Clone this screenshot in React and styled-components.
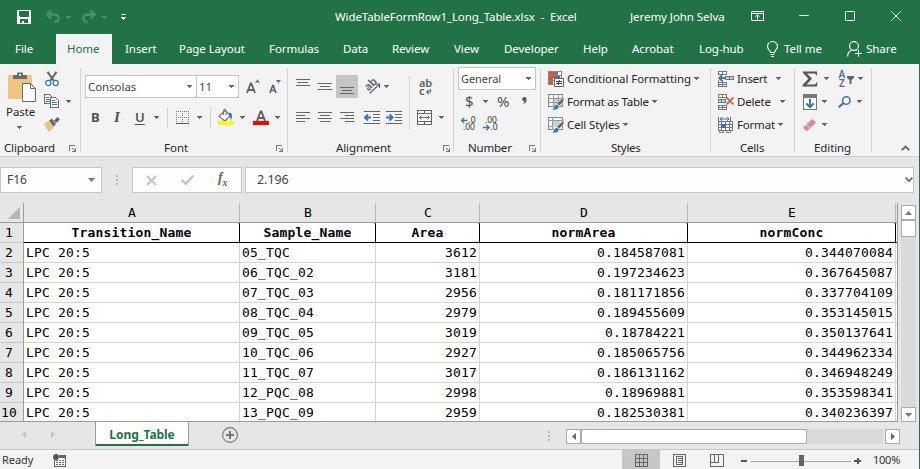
import React from "react";
import styled, { createGlobalStyle, css } from "styled-components";

const C = {
  green: "#217346",
  ribbon: "#f3f3f3",
  chrome: "#e6e6e6",
  line: "#d4d4d4",
  box: "#c6c6c6",
  ink: "#262626",
  icon: "#6a6a6a",
  blue: "#3a76b4",
};

const Global = createGlobalStyle`
  *, *::before, *::after { box-sizing: border-box; }
  body { margin: 0; background: ${C.chrome}; overflow: hidden; }
`;

const ui = `"Noto Sans", "Open Sans", sans-serif`;
const mono = `"DejaVu Sans Mono", "Liberation Mono", monospace`;

const Window = styled.div`
  width: 920px;
  height: 469px;
  display: flex;
  flex-direction: column;
  border-right: 1px solid ${C.green};
  background: ${C.chrome};
  font: 11.5px/16px ${ui};
  letter-spacing: -0.06px;
  color: ${C.ink};
  overflow: hidden;
`;

const Icon = styled.svg`
  display: block;
  flex: none;
  margin-left: ${(p) => p.$ml || 0}px;
  margin-top: ${(p) => p.$mt || 0}px;
  overflow: visible;
`;

const IconSlot = styled.div`
  flex: none;
  margin-left: ${(p) => p.$ml || 0}px;
  margin-top: ${(p) => p.$mt || 0}px;
`;

const Text = styled.span`
  flex: none;
  white-space: pre;
  margin-left: ${(p) => p.$ml || 0}px;
  margin-top: ${(p) => p.$mt || 0}px;
  width: ${(p) => (p.$w ? p.$w + "px" : "auto")};
  letter-spacing: ${(p) => p.$ls ?? -0.06}px;
  font-size: ${(p) => p.$size || 11.5}px;
`;

/* ---------- title bar and tabs ---------- */

const TitleBar = styled.header`
  height: 34px;
  flex: none;
  display: flex;
  align-items: center;
  background: ${C.green};
  color: #fff;
`;

const TabStrip = styled.nav`
  height: 30px;
  flex: none;
  padding-left: 15px;
  display: flex;
  align-items: center;
  background: ${C.green};
  color: #fff;
`;

const Tab = styled.div`
  flex: none;
  width: ${(p) => p.$w}px;
  height: 30px;
  padding-left: ${(p) => p.$pl || 0}px;
  display: flex;
  align-items: center;
  white-space: nowrap;
  ${(p) =>
    p.$active &&
    css`
      background: ${C.ribbon};
      color: ${C.green};
    `}
`;

/* ---------- ribbon ---------- */

const Ribbon = styled.section`
  height: 93px;
  flex: none;
  display: flex;
  background: ${C.ribbon};
  border-bottom: 1px solid #cfcfcf;
`;

const Group = styled.div`
  flex: none;
  width: ${(p) => p.$w}px;
  height: 92px;
  display: flex;
  flex-direction: column;
`;

const GroupBody = styled.div`
  height: 76px;
  flex: none;
  display: flex;
  flex-direction: ${(p) => (p.$row ? "row" : "column")};
  padding-top: ${(p) => p.$pt || 0}px;
`;

const Line = styled.div`
  flex: none;
  height: ${(p) => p.$h || 23}px;
  display: flex;
  align-items: center;
`;

const GroupFoot = styled.div`
  height: 16px;
  flex: none;
  display: flex;
  align-items: center;
`;

const GroupName = styled.span`
  flex: none;
  margin-left: ${(p) => p.$ml}px;
  width: ${(p) => p.$w}px;
  letter-spacing: ${(p) => p.$ls || 0}px;
  white-space: nowrap;
`;

const Divider = styled.div`
  flex: none;
  width: 1px;
  height: ${(p) => p.$h || 84}px;
  margin: ${(p) => p.$mt ?? 4}px 0 0 ${(p) => p.$ml || 0}px;
  background: ${C.line};
`;

const Combo = styled.div`
  flex: none;
  width: ${(p) => p.$w}px;
  height: 23px;
  margin-left: ${(p) => p.$ml || 0}px;
  padding: 0 ${(p) => p.$pr ?? 4}px 0 2px;
  display: flex;
  align-items: center;
  justify-content: space-between;
  background: #fff;
  border: 1px solid ${C.box};
  color: #444;
`;

const Pressed = styled.div`
  flex: none;
  width: 22px;
  height: 23px;
  margin-left: ${(p) => p.$ml}px;
  padding: 12px 0 0 4px;
  background: #c5c5c5;
`;

const Glyph = styled.span`
  flex: none;
  margin-left: ${(p) => p.$ml}px;
  width: ${(p) => p.$w}px;
  font-size: ${(p) => p.$size || 13}px;
  font-weight: ${(p) => p.$weight || 400};
  font-style: ${(p) => (p.$italic ? "italic" : "normal")};
  text-decoration: ${(p) => (p.$underline ? "underline" : "none")};
  text-underline-offset: 2px;
  font-family: ${(p) => (p.$serif ? `"Liberation Serif", serif` : ui)};
  color: ${(p) => p.$color || "#505050"};
  white-space: nowrap;
`;

const PasteColumn = styled.div`
  width: 40px;
  display: flex;
  flex-direction: column;
`;

const Column = styled.div`
  display: flex;
  flex-direction: column;
`;

const Arrow = ({ ml, mt, color = "#666" }) => (
  <Icon $ml={ml} $mt={mt} width="5" height="3" viewBox="0 0 5 3" shapeRendering="crispEdges">
    <path d="M0 0h5v1H0zM1 1h3v1H1zM2 2h1v1H2z" fill={color} />
  </Icon>
);

const Launcher = ({ ml }) => (
  <Icon $ml={ml} $mt={1} width="7" height="7" viewBox="0 0 7 7" shapeRendering="crispEdges">
    <path d="M0 0h6v1H1v5H0zM3 3h1v1H3zM4 4h1v1H4zM6 3h1v4H3V6h2V5h1z" fill="#777" />
  </Icon>
);

const Bars = ({ ml, rows, color = "#666" }) => (
  <Icon $ml={ml} width="14" height={rows.length * 3 - 2} shapeRendering="crispEdges">
    {rows.map(([x, w], i) => (
      <rect key={i} x={x} y={i * 3} width={w} height="1" fill={color} />
    ))}
  </Icon>
);

const PasteIcon = () => (
  <Icon $ml={8} $mt={2} width="28" height="30" viewBox="0 0 28 30">
    <path d="M1 3h22a1 1 0 0 1 1 1v22a1 1 0 0 1-1 1H1a1 1 0 0 1-1-1V4a1 1 0 0 1 1-1z" fill="#edc67f" />
    <path d="M5 3h4V1.500a1 1 0 0 1 1-1h4a1 1 0 0 1 1 1V3h4v4H5zM11 2v2h2V2z" fill="#6d6d6d" fillRule="evenodd" />
    <path d="M14.500 11.500h8l5 5v13h-13z" fill="#fff" stroke="#6d6d6d" />
    <path d="M22.500 11.500v5h5" fill="none" stroke="#6d6d6d" />
  </Icon>
);

const CutIcon = () => (
  <Icon $ml={5} width="14" height="16" viewBox="0 0 14 16">
    <path d="M2.500 0.800 9 10M11.500 .8 5 10" stroke="#666" strokeWidth="2" />
    <circle cx="3.300" cy="12" r="2.600" fill="none" stroke={C.blue} strokeWidth="1.200" />
    <circle cx="10.700" cy="12" r="2.600" fill="none" stroke={C.blue} strokeWidth="1.200" />
  </Icon>
);

const CopyIcon = () => (
  <Icon $ml={4} width="15" height="14" viewBox="0 0 15 14" shapeRendering="crispEdges">
    <path d="M.5.500h5l2 2v7h-7z" fill="#fff" stroke="#6d6d6d" />
    <path d="M2 3h3v1H2zM2 5h4v1H2zM2 7h4v1H2z" fill={C.blue} />
    <path d="M6.500 3.500h5l3 3v7h-8z" fill="#fff" stroke="#6d6d6d" />
    <path d="M8 6h3v1H8zM8 8h5v1H8zM8 10h5v1H8z" fill={C.blue} />
  </Icon>
);

const BrushIcon = () => (
  <Icon $ml={4} width="16" height="14" viewBox="0 0 16 14">
    <path d="M0 6.500 5 4l5 6-3.500 4H4z" fill="#edc088" />
    <path d="M5 3.500 8 1.500l4 5.500-2.500 2.500zM10 3.500 13.500 0 16 2.500 12 6z" fill="#666" />
  </Icon>
);

const GrowFont = ({ ml, big }) => (
  <Icon $ml={ml} width="14" height="16" viewBox="0 0 14 16">
    {big ? (
      <path d="M1 14 4.700 4.500h.6L9 14M2.300 11h5.400" fill="none" stroke="#606060" strokeWidth="1.800" />
    ) : (
      <path d="M1 14 3.700 6.500h.6L7 14M2 11.500h4" fill="none" stroke="#606060" strokeWidth="1.600" />
    )}
    <path d={big ? "M9 3.500h5L11.500.500z" : "M7 1h5L9.500 4z"} fill={C.blue} />
  </Icon>
);

const BordersIcon = () => (
  <Icon $ml={8} width="13" height="13" viewBox="0 0 13 13" shapeRendering="crispEdges">
    <path d="M0 .5h13M0 6.500h13M.5 0v12M6.500 0v12M12.500 0v12" stroke="#777" strokeDasharray="1 1" />
    <path d="M0 12h13v1H0z" fill="#555" />
  </Icon>
);

const FillIcon = () => (
  <Icon $ml={7} width="16" height="16" viewBox="0 0 16 16">
    <path d="M1 7.500 7 1.500l5.500 5-5.500 5.500z" fill="#fff" stroke="#707070" strokeWidth="1.100" />
    <path d="M5.500 6V1.500a1.300 1.300 0 0 1 2.600 0V6" fill="none" stroke="#707070" />
    <path d="M11 3.500c3.500 0 4 4 1.500 8.500.3-2-.2-4-1.500-6z" fill={C.blue} />
    <rect y="12" width="16" height="4" fill="#ff0" shapeRendering="crispEdges" />
  </Icon>
);

const FontColorIcon = () => (
  <Icon $ml={8} width="16" height="16" viewBox="0 0 16 16">
    <path d="M4 12 7.600 2.500h.8L12 12M5.200 9h5.600" fill="none" stroke="#606060" strokeWidth="1.900" />
    <rect y="12" width="16" height="4" fill="#f00" shapeRendering="crispEdges" />
  </Icon>
);

const IconText = styled.text`
  font: 600 11px ${ui};
  fill: #606060;
`;

const OrientIcon = () => (
  <Icon $ml={6} width="16" height="16" viewBox="0 0 16 16">
    <IconText transform="translate(4.500 12.500) rotate(-45)">ab</IconText>
    <path d="M5.500 14.500 15 5.500M11.500 5H15.500V9" fill="none" stroke="#666" strokeWidth="1.200" />
  </Icon>
);

const WrapIcon = () => (
  <Icon $ml={9} width="13" height="16" viewBox="0 0 13 16">
    <IconText x="0" y="8">ab</IconText>
    <IconText x="0" y="16">c</IconText>
    <path d="M11.500 10v3H8M9.800 11l-2 2 2 2" fill="none" stroke={C.blue} strokeWidth="1.200" />
  </Icon>
);

const IndentIcon = ({ ml, right }) => (
  <Icon $ml={ml} width="16" height="13" viewBox="0 0 16 13">
    <path d="M0 0h16v1H0zM9 3h7v1H9zM9 6h7v1H9zM9 9h7v1H9zM0 12h16v1H0z" fill="#666" shapeRendering="crispEdges" />
    <path d={right ? "M0 6.500h6M3.500 3.500l3 3-3 3" : "M7 6.500H1M4 3.500l-3 3 3 3"} fill="none" stroke={C.blue} strokeWidth="2" />
  </Icon>
);

const MergeIcon = () => (
  <Icon $ml={7} width="15" height="15" viewBox="0 0 15 15">
    <path d="M.5.500h14v14H.5zM.5 3.500h14M.5 11.500h14M7.500 0v3.500M7.500 11.500V15" fill="#fff" stroke="#666" shapeRendering="crispEdges" />
    <path d="M2.500 7.500h10M4.500 5.500l-2 2 2 2M10.500 5.500l2 2-2 2" fill="none" stroke={C.blue} />
  </Icon>
);

const DecimalText = styled.text`
  font: 8.500px ${ui};
  fill: #333;
`;

const DecimalIcon = ({ ml, less }) => (
  <Icon $ml={ml} width="15" height="14" viewBox="0 0 15 14">
    <DecimalText x={less ? 2 : 7.500} y="6">{less ? ".00" : ".0"}</DecimalText>
    <DecimalText x={less ? 7.500 : 2} y="13">{less ? ".0" : ".00"}</DecimalText>
    <path
      d={less ? "M0 10.500h6M3.500 8l2.700 2.500L3.500 13" : "M6.500 3.500h-6M3.200 1 .5 3.500 3.200 6"}
      fill="none"
      stroke={C.blue}
      strokeWidth="1.300"
    />
  </Icon>
);

const CondIcon = () => (
  <Icon $ml={7} width="16" height="16" viewBox="0 0 16 16" shapeRendering="crispEdges">
    <path d="M.5.500h13v13H.5z" fill="#fff" stroke="#888" />
    <path d="M9 0v14M0 4.500h14M0 9.500h14" stroke="#888" />
    <path d="M1 1h4v3H1zM1 10h4v3H1z" fill="#d5532e" />
    <path d="M5 1h4v3H5zM1 5h4v4H1z" fill="#d5532e" />
    <path d="M5 5h7v2H5z" fill={C.blue} />
    <path d="M6.500 7.500h9v8h-9z" fill="#fff" stroke="#666" />
    <path d="M8 10h6v1H8zM8 12h6v1H8zM11 9h1v2h-1zM10 11h1v3h-1z" fill="#444" />
  </Icon>
);

const TableBrushIcon = ({ cells }) => (
  <Icon $ml={7} width="16" height="16" viewBox="0 0 16 16">
    <g shapeRendering="crispEdges">
      <path d="M.5.500h14v12H.5z" fill="#fff" stroke="#888" />
      <path d={cells ? "M4 4h8v6H4z" : "M5 5h9v7H5z"} fill="#bcd3e8" />
      <path d={cells ? "M4.500 0v13M0 3.500h15M0 9.500h5" : "M5.500 0v13M10.500 0v13M0 4.500h15M0 8.500h15"} stroke="#999" fill="none" />
    </g>
    <path d="M15.800 3v4l-4.500 5-2.500-2.500z" fill="#666" stroke="#f3f3f3" strokeWidth=".6" />
    <path d="M3.500 16c2 0 2-5.500 5-5.500 2 0 3 2 2 3.800C9.500 16 6 16 3.500 16z" fill={C.blue} stroke="#f3f3f3" strokeWidth=".6" />
  </Icon>
);

const CellsIcon = ({ kind }) => (
  <Icon $ml={7} width="16" height="16" viewBox="0 0 16 16">
    {kind === "format" ? (
      <>
        <path d="M.5 0v4M12.500 0v4M2 2h9M4 .3 2 2l2 1.700M9 .3 11 2 9 3.700" fill="none" stroke={C.blue} />
        <g shapeRendering="crispEdges">
          <path d="M.5 4.500h14v9H.5zM3.500 4v10M7.500 4v10M11.500 4v10M0 7.500h15M0 10.500h15" fill="#fff" stroke="#777" />
          <path d="M3 7h5v4H3z" fill={C.blue} />
          <path d="M1 14v1.500h4V14M8 14v1.500h4V14" fill="none" stroke="#888" />
        </g>
      </>
    ) : (
      <>
        <g shapeRendering="crispEdges">
          <path d="M.5.500h8v3h-8zM4.500 0v4M.5 11.500h8v4h-8zM4.500 11v5M.5 13.500h8" fill="#fff" stroke="#777" />
          {kind === "insert" && <path d="M7.500 5.500h8v3h-8zM11.500 5v4" fill="#bcd3e8" stroke="#777" />}
          {kind === "delete" && <path d="M.5 5.500h7v3h-7zM3.500 5v4" fill="#bcd3e8" stroke="#777" />}
          {kind === "insert" && <path d="M.5 9v2M4.500 9v2" stroke="#777" />}
        </g>
        {kind === "insert" && <path d="M7 7H1.500M4 4.200 1.200 7 4 9.800" fill="none" stroke={C.blue} strokeWidth="1.800" />}
        {kind === "delete" && <path d="m8.500 3.500 7 7M15.500 3.500l-7 7" stroke="#d9532f" strokeWidth="1.700" />}
      </>
    )}
  </Icon>
);

const SumIcon = () => (
  <Icon $ml={7} width="16" height="16" viewBox="0 0 16 16">
    <path d="M1 .5h14V4h-1c-.3-1.200-.8-1.500-2-1.500H5l5 5.200-5.500 5.800H12c1.500 0 2-.5 2.500-2h1L15 15.500H.5V14l6-6.200L1 2z" fill="#555" />
  </Icon>
);

const SortLetter = styled.text`
  font: 600 10px ${ui};
  fill: ${(p) => p.$fill};
`;

const SortIcon = () => (
  <Icon $ml={10} width="15" height="16" viewBox="0 0 15 16">
    <SortLetter x="-.5" y="7" $fill={C.blue}>A</SortLetter>
    <SortLetter x="0" y="16" $fill="#8a4fae">Z</SortLetter>
    <path d="M8 5h7v2l-2.500 2v4h-2V9L8 7z" fill="#666" />
  </Icon>
);

const FillDownIcon = () => (
  <Icon $ml={8} width="14" height="16" viewBox="0 0 14 16">
    <path d="M.5.500h13v15H.5z" fill="#fff" stroke="#777" shapeRendering="crispEdges" />
    <path d="M0 0h14v4H0z" fill="#777" />
    <path d="M7 5v8M3.300 9.500 7 13.200l3.700-3.700" fill="none" stroke={C.blue} strokeWidth="2" />
  </Icon>
);

const FindIcon = () => (
  <Icon $ml={11} width="13" height="12" viewBox="0 0 13 12">
    <circle cx="8.300" cy="4.500" r="3.700" fill="#fff" stroke={C.blue} strokeWidth="1.600" />
    <path d="M5.500 7 .8 11.300" stroke={C.blue} strokeWidth="2.200" />
  </Icon>
);

const EraserIcon = () => (
  <Icon $ml={8} width="13" height="12" viewBox="0 0 13 12">
    <path d="M3.800 5 9.300 0 13 3.500 7.500 9zM3 5.800l3.800 3.800L4.500 11.800H3L0 8.500z" fill="#e8829a" />
  </Icon>
);

/* ---------- formula bar ---------- */

const FormulaBar = styled.section`
  flex: none;
  height: 46px;
  padding-top: 10px;
  display: flex;
  align-items: flex-start;
`;

const Field = styled.div`
  flex: none;
  width: ${(p) => p.$w}px;
  height: 26px;
  margin-left: ${(p) => p.$ml || 0}px;
  display: flex;
  align-items: center;
  background: #fdfdfd;
  border: 1px solid ${C.box};
  color: #444;
`;

/* ---------- sheet ---------- */

const SheetArea = styled.main`
  flex: none;
  height: 219px;
  display: flex;
`;

const Grid = styled.div`
  flex: none;
  width: 898px;
  height: 219px;
  display: flex;
  flex-direction: column;
  overflow: hidden;
  border-right: 1px solid #9b9b9b;
  border-bottom: 1px solid #9b9b9b;
  font: 13px/20px ${mono};
  letter-spacing: 0.174px;
  color: #000;
`;

const GridRow = styled.div`
  flex: none;
  height: 20px;
  display: grid;
  grid-template-rows: 20px;
  grid-template-columns: 24px 216px 136px 104px 208px 208px 1fr;
`;

const ColumnLetter = styled.div`
  background: ${C.chrome};
  border-right: 1px solid #b8b8b8;
  border-bottom: 1px solid #9b9b9b;
  text-align: center;
  padding-left: 1px;
`;

const Corner = styled(ColumnLetter)`
  border-right-color: #9b9b9b;
  display: flex;
  align-items: flex-end;
  justify-content: flex-end;
  padding: 0 3px 3px 0;
`;

const RowNumber = styled.div`
  background: ${C.chrome};
  border-right: 1px solid #9b9b9b;
  border-bottom: 1px solid #c4c4c4;
  padding-right: 5px;
  white-space: nowrap;
  display: flex;
  justify-content: center;
`;

const Cell = styled.div`
  background: #fff;
  border-right: 1px solid ${C.line};
  border-bottom: 1px solid ${C.line};
  padding: 0 2px;
  text-align: ${(p) => (p.$num ? "right" : "left")};
  white-space: nowrap;
`;

const HeadCell = styled(Cell)`
  border-color: #000;
  font-weight: 700;
  text-align: center;
`;

const VScroll = styled.div`
  flex: none;
  width: 15px;
  margin: 2px 0 0 3px;
  height: 217px;
  display: flex;
  flex-direction: column;
  justify-content: space-between;
  background: #dadada;
`;

const ScrollButton = styled.div`
  width: 15px;
  height: 15px;
  flex: none;
  display: flex;
  align-items: center;
  justify-content: center;
  background: #fff;
  border: 1px solid #ababab;
`;

const Thumb = styled.div`
  flex: none;
  width: ${(p) => p.$w}px;
  height: ${(p) => p.$h}px;
  background: #fff;
  border: 1px solid #ababab;
`;

/* ---------- sheet tabs and status bar ---------- */

const SheetTabs = styled.div`
  flex: none;
  height: 28px;
  display: flex;
  align-items: flex-start;
  border-bottom: 1px solid #c6c6c6;
`;

const SheetTab = styled.div`
  flex: none;
  width: 94px;
  height: 24px;
  margin: 0 0 0 40px;
  display: flex;
  justify-content: center;
  background: #fff;
  border: solid #9b9b9b;
  border-width: 0 1px;
  box-shadow: inset 0 -2px 0 ${C.green};
  color: ${C.green};
  font-size: 12px;
  font-weight: 700;
  line-height: 25px;
`;

const HScroll = styled.div`
  flex: none;
  height: 15px;
  margin: 7px 0 0 16px;
  display: flex;
`;

const Track = styled.div`
  width: 76px;
  margin-right: 2px;
  background: #dadada;
`;

const StatusBar = styled.footer`
  flex: none;
  height: 20px;
  display: flex;
  align-items: center;
  background: ${C.ribbon};
  color: #333;
`;

const ViewButtons = styled.div`
  flex: none;
  display: flex;
  margin-left: 556px;
`;

const ViewButton = styled.div`
  flex: none;
  width: 38px;
  height: 20px;
  display: flex;
  align-items: center;
  justify-content: center;
  background: ${(p) => (p.$on ? "#c6c6c6" : "transparent")};
`;

const columns = ["A", "B", "C", "D", "E"];
const headers = ["Transition_Name", "Sample_Name", "Area", "normArea", "normConc"];
const rows = [
  ["05_TQC", 3612, "0.184587081", "0.344070084"],
  ["06_TQC_02", 3181, "0.197234623", "0.367645087"],
  ["07_TQC_03", 2956, "0.181171856", "0.337704109"],
  ["08_TQC_04", 2979, "0.189455609", "0.353145015"],
  ["09_TQC_05", 3019, "0.18784221", "0.350137641"],
  ["10_TQC_06", 2927, "0.185065756", "0.344962334"],
  ["11_TQC_07", 3017, "0.186131162", "0.346948249"],
  ["12_PQC_08", 2998, "0.18969881", "0.353598341"],
  ["13_PQC_09", 2959, "0.182530381", "0.340236397"],
];

const tabs = [
  ["File", 41, 0],
  ["Home", 56, 11],
  ["Insert", 67, 13],
  ["Page Layout", 90, 0],
  ["Formulas", 74, 0],
  ["Data", 49, 0],
  ["Review", 62, 0],
  ["View", 50, 0],
  ["Developer", 79, 0],
  ["Help", 49, 0],
  ["Acrobat", 67, 0],
  ["Log-hub", 68, 0],
];

function Title() {
  return (
    <TitleBar>
      <Icon $ml={17} width="14" height="14" viewBox="0 0 14 14" shapeRendering="crispEdges">
        <path d="M0 0h14v14H0zM2 1v5l1 1h8l1-1V1zM3 9v4h2v-2h2v2h4V9z" fill="#fff" fillRule="evenodd" />
      </Icon>
      <Icon $ml={15} $mt={-1} width="14" height="13" viewBox="0 0 14 13">
        <path d="M5.500.300 1.200 4.500l4.300 4.200M1.200 4.500H9c5 0 5 7.500-.5 7.500" fill="none" stroke="#4f9069" strokeWidth="2.300" />
      </Icon>
      <Arrow ml={6} color="#4f9069" />
      <Icon $ml={11} $mt={-1} width="14" height="13" viewBox="0 0 14 13">
        <path d="M8.500.300l4.300 4.200-4.300 4.200M12.800 4.500H5c-5 0-5 7.500.5 7.500" fill="none" stroke="#4f9069" strokeWidth="2.300" />
      </Icon>
      <Arrow ml={6} color="#4f9069" />
      <Icon $ml={14} width="5" height="6" viewBox="0 0 5 6" shapeRendering="crispEdges">
        <path d="M0 0h5v1H0zM0 3h5v1H0zM1 4h3v1H1zM2 5h1v1H2z" fill="#fff" />
      </Icon>
      <Text $ml={209} $w={295} $ls={-0.1}>{"WideTableFormRow1_Long_Table.xlsx  -  Excel"}</Text>
      <Text $w={121}>Jeremy John Selva</Text>
      <Icon $mt={-3} width="13" height="10" viewBox="0 0 13 10">
        <path d="M.5.500h12v9H.5zM1 2.500h12" fill="none" stroke="#fff" shapeRendering="crispEdges" />
        <path d="M6.500 8.500V4M4.500 5.800l2-2 2 2" fill="none" stroke="#fff" />
      </Icon>
      <Icon $ml={35} $mt={-3} width="10" height="1"><path d="M0 0h10v1H0z" fill="#fff" /></Icon>
      <Icon $ml={36} $mt={-3} width="10" height="10"><path d="M.5.500h9v9h-9z" fill="none" stroke="#fff" /></Icon>
      <Icon $ml={36} $mt={-3} width="10" height="10"><path d="m.3.300 9.400 9.400M9.700.300.3 9.700" stroke="#fff" /></Icon>
    </TitleBar>
  );
}

function Tabs() {
  return (
    <TabStrip>
      {tabs.map(([name, w, pl]) => (
        <Tab key={name} $w={w} $pl={pl} $active={name === "Home"}>{name}</Tab>
      ))}
      <Icon width="11" height="16" viewBox="0 0 11 16">
        <path d="M3.500 11.500c0-2-3-3-3-6a5 5 0 0 1 10 0c0 3-3 4-3 6zM3.500 13.500h4M4 15.500h3" fill="none" stroke="#fff" strokeWidth="1.100" />
      </Icon>
      <Tab $w={63} $pl={6}>Tell me</Tab>
      <Icon $ml={6} width="15" height="16" viewBox="0 0 15 16">
        <circle cx="7" cy="5" r="4.400" fill="none" stroke="#fff" strokeWidth="1.100" />
        <path d="M.6 15.500c0-3 1.500-5.500 4.200-6.600M8.500 9.300l1 .5M8 12.500h7M11.500 9v7" fill="none" stroke="#fff" strokeWidth="1.100" />
      </Icon>
      <Tab $w={50} $pl={4}>Share</Tab>
    </TabStrip>
  );
}

function Clipboard() {
  return (
    <Group $w={80}>
      <GroupBody $row $pt={6}>
        <PasteColumn>
          <PasteIcon />
          <Text $ml={6} $mt={2}>Paste</Text>
          <Arrow ml={17} mt={6} />
        </PasteColumn>
        <Column>
          <Line $h={17}><CutIcon /></Line>
          <Line $h={28}><CopyIcon /><Arrow ml={7} mt={1} /></Line>
          <Line $h={18}><BrushIcon /></Line>
        </Column>
      </GroupBody>
      <GroupFoot>
        <GroupName $ml={4} $w={65} $ls={-0.15}>Clipboard</GroupName>
        <Launcher />
      </GroupFoot>
    </Group>
  );
}

function Font() {
  return (
    <Group $w={206}>
      <GroupBody $pt={11}>
        <Line>
          <Combo $w={112} $ml={4}>Consolas<Arrow /></Combo>
          <Combo $w={43} $ml={-1}>11<Arrow /></Combo>
          <GrowFont ml={7} big />
          <GrowFont ml={9} />
        </Line>
        <Line $h={38}>
          <Glyph $ml={10} $w={23} $weight={700}>B</Glyph>
          <Glyph $w={21} $weight={600} $italic $serif $size={15}>I</Glyph>
          <Glyph $w={19} $weight={600} $underline>U</Glyph>
          <Arrow ml={0} />
          <Divider $ml={8} $mt={0} $h={21} />
          <BordersIcon />
          <Arrow ml={8} />
          <Divider $ml={8} $mt={0} $h={21} />
          <FillIcon />
          <Arrow ml={6} />
          <FontColorIcon />
          <Arrow ml={6} />
        </Line>
      </GroupBody>
      <GroupFoot>
        <GroupName $ml={83} $w={112}>Font</GroupName>
        <Launcher />
      </GroupFoot>
    </Group>
  );
}

function Alignment() {
  const full = [0, 14];
  const mid = [2, 10];
  return (
    <Group $w={165}>
      <GroupBody $row $pt={11}>
        <Column>
          <Line>
            <IconSlot $ml={8} $mt={-9}><Bars rows={[full, mid, full]} /></IconSlot>
            <IconSlot $ml={8}><Bars rows={[full, mid, full]} /></IconSlot>
            <Pressed $ml={4}><Bars rows={[full, mid, full]} /></Pressed>
            <OrientIcon />
            <Arrow ml={4} />
          </Line>
          <Line $h={38}>
            <Bars ml={8} rows={[full, [0, 9], full, [0, 9]]} />
            <Bars ml={8} rows={[full, [2, 10], full, [2, 10]]} />
            <Bars ml={8} rows={[full, [5, 9], full, [5, 9]]} />
            <IndentIcon ml={10} />
            <IndentIcon ml={6} right />
          </Line>
        </Column>
        <Divider $ml={7} $mt={0} $h={55} />
        <Column>
          <Line><WrapIcon /></Line>
          <Line $h={38}><MergeIcon /><Arrow ml={7} /></Line>
        </Column>
      </GroupBody>
      <GroupFoot>
        <GroupName $ml={48} $w={107} $ls={-0.1}>Alignment</GroupName>
        <Launcher />
      </GroupFoot>
    </Group>
  );
}

function NumberGroup() {
  return (
    <Group $w={86}>
      <GroupBody $pt={3}>
        <Line>
          <Combo $w={78} $ml={4}><Text $size={11}>General</Text><Arrow /></Combo>
        </Line>
        <Line $h={22}>
          <Glyph $ml={11} $w={18} $size={15}>$</Glyph>
          <Arrow />
          <Glyph $ml={9} $w={25} $size={15}>%</Glyph>
          <Icon $mt={-2} width="5" height="7" viewBox="0 0 5 7">
            <path d="M2.300 0A2.200 2.200 0 0 1 4.600 2.400C4.600 5 3 6.700.8 7c1-.8 1.600-1.700 1.600-2.600A2.200 2.200 0 1 1 2.300 0z" fill="#555" />
          </Icon>
        </Line>
        <Line $h={23}>
          <DecimalIcon ml={7} />
          <DecimalIcon ml={7} less />
        </Line>
      </GroupBody>
      <GroupFoot>
        <GroupName $ml={14} $w={61} $ls={-0.2}>Number</GroupName>
        <Launcher />
      </GroupFoot>
    </Group>
  );
}

function Styles() {
  return (
    <Group $w={169}>
      <GroupBody $pt={3}>
        <Line><CondIcon /><Text $ml={3} $w={127}>Conditional Formatting</Text><Arrow /></Line>
        <Line><TableBrushIcon /><Text $ml={3} $w={85} $ls={-0.25}>Format as Table</Text><Arrow /></Line>
        <Line><TableBrushIcon cells /><Text $ml={3} $w={56} $ls={-0.12}>Cell Styles</Text><Arrow /></Line>
      </GroupBody>
      <GroupFoot><GroupName $ml={70} $ls={-0.3}>Styles</GroupName></GroupFoot>
    </Group>
  );
}

function Cells() {
  return (
    <Group $w={83}>
      <GroupBody $pt={3}>
        <Line><CellsIcon kind="insert" /><Text $ml={3} $w={39} $ls={-0.3}>Insert</Text><Arrow /></Line>
        <Line><CellsIcon kind="delete" /><Text $ml={3} $w={43} $ls={-0.2}>Delete</Text><Arrow /></Line>
        <Line><CellsIcon kind="format" /><Text $ml={3} $w={41} $ls={-0.2}>Format</Text><Arrow /></Line>
      </GroupBody>
      <GroupFoot><GroupName $ml={29} $ls={-0.2}>Cells</GroupName></GroupFoot>
    </Group>
  );
}

function Editing() {
  return (
    <Group $w={76}>
      <GroupBody $pt={3}>
        <Line><SumIcon /><Arrow ml={6} /><SortIcon /><Arrow ml={4} /></Line>
        <Line><FillDownIcon /><Arrow ml={5} /><FindIcon /><Arrow ml={6} /></Line>
        <Line><EraserIcon /><Arrow ml={6} /></Line>
      </GroupBody>
      <GroupFoot><GroupName $ml={19} $ls={-0.1}>Editing</GroupName></GroupFoot>
    </Group>
  );
}

function Sheet() {
  return (
    <SheetArea>
      <Grid>
        <GridRow>
          <Corner>
            <Icon width="12" height="12"><path d="M12 0v12H0z" fill="#b4b4b4" /></Icon>
          </Corner>
          {columns.map((c) => <ColumnLetter key={c}>{c}</ColumnLetter>)}
          <ColumnLetter />
        </GridRow>
        <GridRow>
          <RowNumber>1</RowNumber>
          {headers.map((h) => <HeadCell key={h}>{h}</HeadCell>)}
          <HeadCell />
        </GridRow>
        {rows.map(([name, area, na, nc], i) => (
          <GridRow key={name}>
            <RowNumber>{i + 2}</RowNumber>
            <Cell>LPC 20:5</Cell>
            <Cell>{name}</Cell>
            <Cell $num>{area}</Cell>
            <Cell $num>{na}</Cell>
            <Cell $num>{nc}</Cell>
            <Cell />
          </GridRow>
        ))}
      </Grid>
      <VScroll>
        <Column>
          <ScrollButton><Icon width="7" height="4"><path d="M0 4h7L3.500 0z" fill="#777" /></Icon></ScrollButton>
          <Thumb $w={15} $h={17} />
        </Column>
        <ScrollButton><Icon width="7" height="4"><path d="M0 0h7L3.500 4z" fill="#777" /></Icon></ScrollButton>
      </VScroll>
    </SheetArea>
  );
}

export default function App() {
  return (
    <Window>
      <Global />
      <Title />
      <Tabs />
      <Ribbon>
        <Clipboard />
        <Divider />
        <Font />
        <Divider />
        <Alignment />
        <Divider />
        <NumberGroup />
        <Divider />
        <Styles />
        <Divider />
        <Cells />
        <Divider />
        <Editing />
        <Divider />
        <Icon $ml={29} $mt={81} width="9" height="6" viewBox="0 0 9 6">
          <path d="m.8 5.200 3.700-3.700 3.700 3.700" fill="none" stroke="#666" strokeWidth="1.800" />
        </Icon>
      </Ribbon>
      <FormulaBar>
        <Field $w={102}>
          <Text $ml={6} $size={12} $w={81}>F16</Text>
          <Icon width="7" height="4"><path d="M0 0h7L3.500 4z" fill="#777" /></Icon>
        </Field>
        <Icon $ml={14} $mt={8} width="2" height="10" shapeRendering="crispEdges">
          <path d="M0 0h2v2H0zM0 4h2v2H0zM0 8h2v2H0z" fill="#b5b5b5" />
        </Icon>
        <Field $w={110} $ml={14}>
          <Icon $ml={13} width="11" height="9"><path d="m1 0 9 9M10 0 1 9" stroke="#c2c2c2" strokeWidth="1.900" /></Icon>
          <Icon $ml={24} width="13" height="10"><path d="m.8 5 4 3.800L12.200.800" fill="none" stroke="#c2c2c2" strokeWidth="2.300" /></Icon>
          <Glyph $ml={24} $w={14} $size={14} $weight={700} $italic $serif $color="#666">
            f<Glyph as="sub" $size={10} $italic $serif $weight={700} $color="#666">x</Glyph>
          </Glyph>
        </Field>
        <Field $w={669} $ml={3}>
          <Text $ml={11} $size={12.5} $w={648}>2.196</Text>
          <Icon width="8" height="6"><path d="m.7.800 3.300 3.300L7.300.800" fill="none" stroke="#777" strokeWidth="2" /></Icon>
        </Field>
      </FormulaBar>
      <Sheet />
      <SheetTabs>
        <Icon $ml={22} $mt={9} width="4" height="7"><path d="M4 0v7L0 3.500z" fill="#c0c0c0" /></Icon>
        <Icon $ml={25} $mt={9} width="4" height="7"><path d="M0 0v7l4-3.500z" fill="#c0c0c0" /></Icon>
        <SheetTab>Long_Table</SheetTab>
        <Icon $ml={33} $mt={5} width="16" height="16">
          <circle cx="8" cy="8" r="7.400" fill="none" stroke="#777" strokeWidth="1.100" />
          <path d="M4 7h8v2H4zM7 4h2v8H7z" fill="#777" />
        </Icon>
        <Icon $ml={310} $mt={9} width="2" height="10" shapeRendering="crispEdges">
          <path d="M0 0h2v2H0zM0 4h2v2H0zM0 8h2v2H0z" fill="#b5b5b5" />
        </Icon>
        <HScroll>
          <ScrollButton><Icon width="4" height="7"><path d="M4 0v7L0 3.500z" fill="#666" /></Icon></ScrollButton>
          <Thumb $w={226} $h={15} />
          <Track />
          <ScrollButton><Icon width="4" height="7"><path d="M0 0v7l4-3.500z" fill="#666" /></Icon></ScrollButton>
        </HScroll>
      </SheetTabs>
      <StatusBar>
        <Text $ml={2} $size={11} $w={51}>Ready</Text>
        <Icon $ml={0} width="13" height="13" viewBox="0 0 13 13">
          <path d="M1.500 4v8.500h11v-11H6" fill="#fff" stroke="#666" shapeRendering="crispEdges" />
          <path d="M6 1h7v3H6zM3 6h2v1H3zM6 6h2v1H6zM9 6h2v1H9zM3 8h2v1H3zM6 8h2v1H6zM9 8h2v1H9zM3 10h2v1H3zM6 10h2v1H6zM9 10h2v1H9z" fill="#666" shapeRendering="crispEdges" />
          <circle cx="3" cy="3" r="2.900" fill="#555" />
        </Icon>
        <ViewButtons>
          <ViewButton $on>
            <Icon width="13" height="13" shapeRendering="crispEdges">
              <path d="M.5.500h12v12H.5zM4.500 0v13M8.500 0v13M0 4.500h13M0 8.500h13" fill="none" stroke="#666" />
            </Icon>
          </ViewButton>
          <ViewButton>
            <Icon width="13" height="13" shapeRendering="crispEdges">
              <path d="M.5.500h12v12H.5zM3.500 2.500h6v8h-6zM5 4.500h4M5 6.500h4M5 8.500h4" fill="none" stroke="#666" />
            </Icon>
          </ViewButton>
          <ViewButton>
            <Icon width="14" height="13" shapeRendering="crispEdges">
              <path d="M.5.500h13v12H.5zM4.500 0v8M8.500 0v8M0 8.500h9" fill="none" stroke="#666" />
            </Icon>
          </ViewButton>
        </ViewButtons>
        <Icon $ml={5} width="118" height="11" shapeRendering="crispEdges">
          <path d="M0 5h6v2H0zM113 5h7v2h-7zM115.500 3h2v6h-2z" fill="#555" />
          <path d="M10 6h100v1H10z" fill="#a8a8a8" />
          <path d="M58 0h5v11h-5z" fill="#666" />
        </Icon>
        <Text $ml={14} $size={11} $ls={-0.25}>100%</Text>
      </StatusBar>
    </Window>
  );
}
